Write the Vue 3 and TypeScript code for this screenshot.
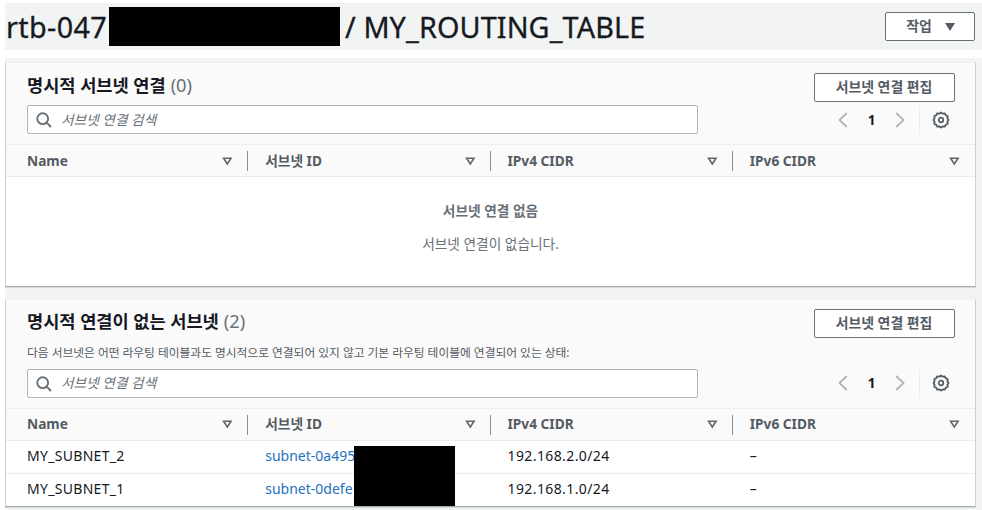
<script setup lang="ts">
interface Subnet {
  name: string
  id: string
  ipv4: string
  ipv6: string
}

interface Panel {
  key: string
  title: string
  count: number
  description?: string
  rows: Subnet[]
}

const columns: string[] = ['Name', '서브넷 ID', 'IPv4 CIDR', 'IPv6 CIDR']

const panels: Panel[] = [
  { key: 'explicit', title: '명시적 서브넷 연결', count: 0, rows: [] },
  {
    key: 'implicit',
    title: '명시적 연결이 없는 서브넷',
    count: 2,
    description:
      '다음 서브넷은 어떤 라우팅 테이블과도 명시적으로 연결되어 있지 않고 기본 라우팅 테이블에 연결되어 있는 상태:',
    rows: [
      { name: 'MY_SUBNET_2', id: 'subnet-0a495', ipv4: '192.168.2.0/24', ipv6: '–' },
      { name: 'MY_SUBNET_1', id: 'subnet-0defe', ipv4: '192.168.1.0/24', ipv6: '–' },
    ],
  },
]
</script>

<template>
  <div class="page">
    <header class="topbar">
      <h1 class="heading">
        <span class="rtb">rtb-047</span>
        <span class="mask"></span>
        <span class="rtname">/ MY_ROUTING_TABLE</span>
      </h1>
      <button class="btn action" type="button">
        <span class="action-label">작업</span>
        <svg width="12" height="10" viewBox="0 0 12 10"><path d="M1 1h10L6 9z" fill="#545b64" /></svg>
      </button>
    </header>

    <main class="content">
      <section v-for="panel in panels" :key="panel.key" class="panel" :class="panel.key">
        <div class="panel-head">
          <div class="title-row">
            <h2 class="title">
              <span class="title-text">{{ panel.title }}</span>
              <span class="count">({{ panel.count }})</span>
            </h2>
            <button class="btn edit" type="button"><span class="edit-label">서브넷 연결 편집</span></button>
          </div>
          <p v-if="panel.description" class="desc"><span>{{ panel.description }}</span></p>
          <div class="tools">
            <div class="search">
              <svg width="16" height="16" viewBox="0 0 16 16" fill="none" stroke="#687078" stroke-width="1.9">
                <circle cx="6.7" cy="6.7" r="5.4" />
                <path d="M10.6 10.6L15 15" />
              </svg>
              <span class="placeholder">서브넷 연결 검색</span>
            </div>
            <div class="pager">
              <svg width="10" height="16" viewBox="0 0 10 16" fill="none" stroke="#aab7b8" stroke-width="1.8">
                <path d="M8.800 1L1.500 8l7.300 7" />
              </svg>
              <span class="page-no">1</span>
              <svg width="10" height="16" viewBox="0 0 10 16" fill="none" stroke="#aab7b8" stroke-width="1.8">
                <path d="M1.200 1L8.500 8l-7.300 7" />
              </svg>
            </div>
            <div class="settings">
              <svg width="18" height="18" viewBox="0 0 18 18" fill="none" stroke="#545b64">
                <path
                  stroke-width="1.8"
                  stroke-linejoin="round"
                  d="M7.300 2.700L9 1.500l1.700 1.200 2.100-.4.900 1.900 2 .9-.3 2.100L16.500 9l-1.100 1.800.3 2.100-2 .9-.9 1.900-2.100-.4L9 16.500l-1.700-1.200-2.100.4-.9-1.900-2-.9.300-2.100L1.500 9l1.100-1.800-.3-2.100 2-.9.900-1.900z"
                />
                <circle cx="9" cy="9" r="2.300" stroke-width="1.700" />
              </svg>
            </div>
          </div>
        </div>

        <div class="grid thead">
          <div v-for="column in columns" :key="column" class="cell th">
            <span class="th-label">{{ column }}</span>
            <svg width="11" height="9" viewBox="0 0 11 9" fill="none" stroke="#5f666e" stroke-width="1.600">
              <path d="M1.600 1.300h7.400L5.300 7z" />
            </svg>
          </div>
        </div>

        <div v-if="panel.rows.length === 0" class="empty">
          <strong>서브넷 연결 없음</strong>
          <span>서브넷 연결이 없습니다.</span>
        </div>
        <div v-else class="tbody">
          <div v-for="row in panel.rows" :key="row.name" class="grid tr">
            <div class="cell name">{{ row.name }}</div>
            <div class="cell"><a class="link">{{ row.id }}</a></div>
            <div class="cell ip">{{ row.ipv4 }}</div>
            <div class="cell dash">{{ row.ipv6 }}</div>
          </div>
          <div class="id-mask"></div>
        </div>
      </section>
    </main>
  </div>
</template>

<style>
body {
  background: #fff;
  overflow: hidden;
}
</style>

<style scoped>
* {
  box-sizing: border-box;
}
.page {
  width: 982px;
  height: 510px;
  padding: 3px 0 0 5px;
  overflow: hidden;
  font-family: 'Noto Sans', 'Noto Sans CJK KR', sans-serif;
  font-size: 13.7px;
  color: #16191f;
}
svg {
  display: block;
  flex: none;
}
.topbar {
  height: 47px;
  background: #f2f3f3;
  display: flex;
  justify-content: space-between;
  padding: 9px 7px 0 1px;
}
.heading {
  margin: -5px 0 0;
  display: flex;
  height: 39px;
  font-size: 28.8px;
  font-weight: 400;
  line-height: 40px;
  white-space: nowrap;
  -webkit-text-stroke: 0.3px #16191f;
}
.rtb {
  width: 103px;
  letter-spacing: 0.35px;
}
.mask {
  width: 231px;
  height: 39px;
  background: #000;
}
.rtname {
  margin-left: 5px;
  letter-spacing: 0.1px;
}
.btn {
  display: flex;
  align-items: center;
  justify-content: center;
  height: 29px;
  padding: 0 0 2px;
  border: 1px solid #687078;
  border-radius: 2px;
  background: #fff;
  color: #545b64;
  font: 700 13.9px/20px 'Noto Sans', 'Noto Sans CJK KR', sans-serif;
  white-space: nowrap;
}
.edit {
  width: 141px;
  padding-right: 1px;
}
.action {
  width: 90px;
  gap: 12px;
  padding-left: 2px;
}
.action svg {
  margin-top: 2px;
}
.content {
  margin-top: 8px;
  height: 452px;
  background: #f2f3f3;
  padding: 4px 6px 0 0;
  display: flex;
  flex-direction: column;
  gap: 12px;
}
.panel {
  flex: none;
  background: #fff;
  border: 1px solid #ccd1d2;
  border-top-color: #eff0f0;
  border-bottom: 1px solid #a6adb1;
  box-shadow: 0 1px 0 #d5d9db;
}
.explicit {
  height: 225px;
}
.implicit {
  height: 208px;
}
.panel-head {
  background: #fafafa;
  border-bottom: 1px solid #eaeded;
  padding: 10px 20px 0 21px;
}
.explicit .panel-head {
  height: 82px;
}
.implicit .panel-head {
  height: 109px;
}
.title-row {
  display: flex;
  justify-content: space-between;
  height: 29px;
}
.title {
  margin: -1px 0 0;
  display: flex;
  gap: 5px;
  font-size: 17.6px;
  line-height: 26px;
  font-weight: 700;
}
.count {
  font-size: 18.3px;
  font-weight: 400;
  color: #687078;
}
.implicit .title {
  margin-top: -2px;
}
.implicit .edit {
  margin-top: -1px;
}
.desc {
  margin: 4px 0 0;
  height: 18px;
  line-height: 18px;
  font-size: 11.74px;
  color: #545b64;
  white-space: nowrap;
}
.tools {
  display: flex;
  align-items: center;
  margin-top: 3px;
}
.implicit .tools {
  margin-top: 8px;
}
.search {
  width: 671px;
  height: 29px;
  display: flex;
  align-items: center;
  gap: 9px;
  padding-left: 8px;
  border: 1px solid #aab7b8;
  border-radius: 2px;
  background: #fff;
}
.placeholder {
  font-style: italic;
  line-height: 20px;
  color: #687078;
}
.implicit .placeholder {
  padding-bottom: 2px;
}
.pager {
  display: flex;
  align-items: center;
  width: 221px;
  padding-left: 140px;
}
.page-no {
  width: 47px;
  text-align: center;
  font-size: 13.5px;
  font-weight: 700;
}
.implicit .pager,
.implicit .settings svg {
  margin-top: -1px;
}
.settings {
  height: 29px;
  padding-left: 12px;
  border-left: 1px solid #eaeded;
  display: flex;
  align-items: center;
}
.grid {
  display: grid;
  grid-template-columns: repeat(4, 1fr);
}
.cell {
  display: flex;
  align-items: center;
  padding-left: 17px;
  line-height: 20px;
  white-space: nowrap;
}
.cell:first-child {
  padding-left: 21px;
}
.thead {
  height: 32px;
  background: #fafafa;
  border-bottom: 1px solid #eaeded;
}
.th {
  justify-content: space-between;
  align-self: center;
  height: 20px;
  padding-right: 14px;
  border-right: 1px solid #879196;
  font-weight: 700;
  color: #545b64;
}
.implicit .th-label {
  padding-bottom: 1px;
}
.explicit .th-label {
  padding-top: 1px;
}
.explicit .th svg {
  margin-top: 1px;
}
.th:last-child {
  border-right-color: transparent;
}
.empty {
  display: flex;
  flex-direction: column;
  align-items: center;
  gap: 12px;
  padding-top: 23px;
  line-height: 21px;
  color: #687078;
}
.tbody {
  position: relative;
}
.tr {
  height: 32px;
  font-size: 14px;
}
.tr .cell {
  padding-bottom: 2px;
}
.name {
  letter-spacing: 0.3px;
}
.ip {
  letter-spacing: 0.4px;
}
.tr + .tr {
  height: 33px;
  border-top: 1px solid #eaeded;
}
.link {
  color: #2470bd;
}
.id-mask {
  position: absolute;
  left: 348px;
  top: 5px;
  width: 101px;
  height: 60px;
  background: #000;
}
</style>
